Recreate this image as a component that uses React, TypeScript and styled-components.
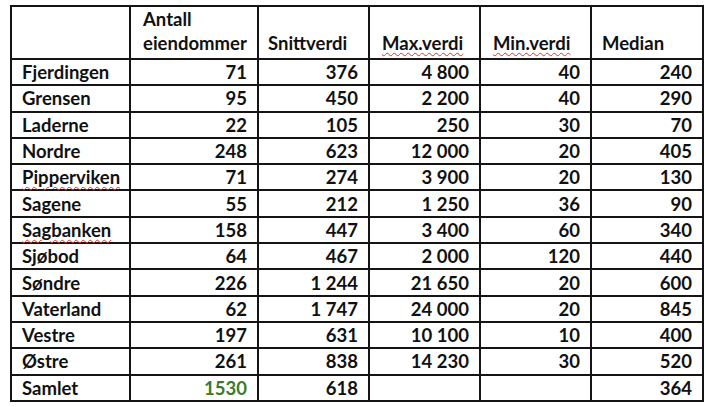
import React from "react";
import styled, { createGlobalStyle } from "styled-components";

const Global = createGlobalStyle`
  html, body { margin: 0; padding: 0; background: #ffffff; }
  body { font-family: Lato, "Open Sans", sans-serif; }
`;

const Page = styled.div`
  padding: 5px 0 0 10px;
  width: 706px;
  height: 407px;
  box-sizing: border-box;
  background: #fff;
`;

const Table = styled.table`
  border-collapse: collapse;
  table-layout: fixed;
  width: 694px;
  font-family: Lato, "Open Sans", sans-serif;
  font-weight: 700;
  font-size: 18.5px;
  color: #111;
`;

const HeadCell = styled.th<{ $pl?: number }>`
  border: 2px solid #151515;
  height: 46px;
  padding: 0 4px 3px ${(p) => p.$pl ?? 10}px;
  text-align: left;
  vertical-align: bottom;
  font-weight: 700;
  line-height: 24px;
  white-space: nowrap;
`;

const Row = styled.tr`
  height: 26.3px;
`;

const NameCell = styled.td`
  border: 2px solid #151515;
  padding: 0 4px 0 10px;
  text-align: left;
  line-height: 20px;
  white-space: nowrap;
`;

const NumCell = styled.td<{ $green?: boolean }>`
  border: 2px solid #151515;
  padding: 0 10px 0 4px;
  text-align: right;
  line-height: 20px;
  color: ${(p) => (p.$green ? "#3c7a2a" : "#111")};
`;

const Spell = styled.span`
  text-decoration: underline wavy #d8342c;
  text-decoration-thickness: 1px;
  text-underline-offset: 2px;
`;

type R = { name: string; spell?: boolean; v: string[]; green?: boolean };

const rows: R[] = [
  { name: "Fjerdingen", v: ["71", "376", "4 800", "40", "240"] },
  { name: "Grensen", v: ["95", "450", "2 200", "40", "290"] },
  { name: "Laderne", v: ["22", "105", "250", "30", "70"] },
  { name: "Nordre", v: ["248", "623", "12 000", "20", "405"] },
  { name: "Pipperviken", spell: true, v: ["71", "274", "3 900", "20", "130"] },
  { name: "Sagene", v: ["55", "212", "1 250", "36", "90"] },
  { name: "Sagbanken", spell: true, v: ["158", "447", "3 400", "60", "340"] },
  { name: "Sjøbod", v: ["64", "467", "2 000", "120", "440"] },
  { name: "Søndre", v: ["226", "1 244", "21 650", "20", "600"] },
  { name: "Vaterland", v: ["62", "1 747", "24 000", "20", "845"] },
  { name: "Vestre", v: ["197", "631", "10 100", "10", "400"] },
  { name: "Østre", v: ["261", "838", "14 230", "30", "520"] },
  { name: "Samlet", v: ["1530", "618", "", "", "364"], green: true },
];

const widths = [119, 128, 111, 111, 111, 112];

export default function App() {
  return (
    <Page>
      <Global />
      <Table>
        <colgroup>
          {widths.map((w, i) => (
            <col key={i} style={{ width: w }} />
          ))}
        </colgroup>
        <thead>
          <tr>
            <HeadCell />
            <HeadCell $pl={12}>
              Antall
              <br />
              eiendommer
            </HeadCell>
            <HeadCell $pl={9}>Snittverdi</HeadCell>
            <HeadCell $pl={12}>
              <Spell>Max.verdi</Spell>
            </HeadCell>
            <HeadCell $pl={12}>
              <Spell>Min.verdi</Spell>
            </HeadCell>
            <HeadCell $pl={10}>Median</HeadCell>
          </tr>
        </thead>
        <tbody>
          {rows.map((r) => (
            <Row key={r.name}>
              <NameCell>{r.spell ? <Spell>{r.name}</Spell> : r.name}</NameCell>
              {r.v.map((x, i) => (
                <NumCell key={i} $green={r.green && i === 0}>
                  {x}
                </NumCell>
              ))}
            </Row>
          ))}
        </tbody>
      </Table>
    </Page>
  );
}
